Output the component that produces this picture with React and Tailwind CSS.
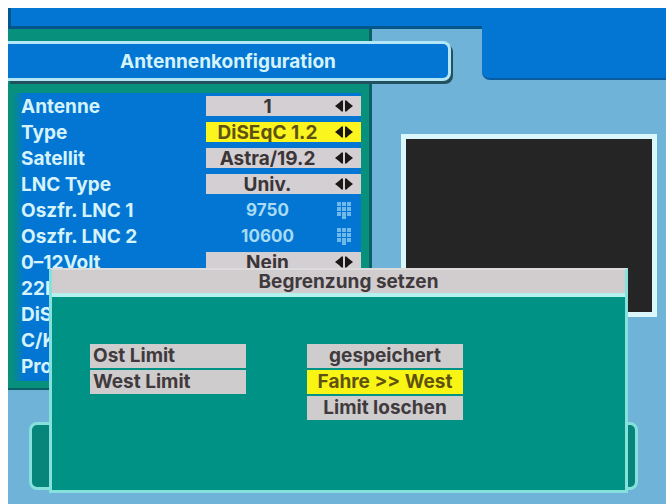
import React, { useState } from "react";

const rows = [
  { id: "antenne", label: "Antenne", type: "select", options: ["1", "2", "3", "4"] },
  { id: "type", label: "Type", type: "select", options: ["DiSEqC 1.2", "DiSEqC 1.0"], active: true },
  { id: "satellit", label: "Satellit", type: "select", options: ["Astra/19.2", "Hotbird/13.0"] },
  { id: "lnc-type", label: "LNC Type", type: "select", options: ["Univ.", "Single"] },
  { id: "lnc-1", label: "Oszfr. LNC 1", type: "number", value: "9750" },
  { id: "lnc-2", label: "Oszfr. LNC 2", type: "number", value: "10600" },
  { id: "volt", label: "0–12Volt", type: "select", options: ["Nein", "Ja"] },
  { id: "khz", label: "22k" },
  { id: "diseqc", label: "DiSEqC" },
  { id: "band", label: "C/Ku" },
  { id: "prog", label: "Prog" },
];

const ArrowsIcon = () => (
  <svg
    className="absolute right-2 top-1 pointer-events-none"
    width="18"
    height="12"
    viewBox="0 0 18 12"
    fill="#1c1717"
  >
    <path d="M4.5 2.5L6.5 0.5H8V11.5H6.5L4.5 9.5L0 6Z" />
    <path d="M13.5 2.5L11.5 0.5H10V11.5H11.5L13.5 9.5L18 6Z" />
  </svg>
);

const KeypadIcon = () => (
  <svg
    className="absolute right-2 top-[2px] pointer-events-none"
    width="16"
    height="18"
    viewBox="0 0 16 18"
    fill="#6fb9ea"
  >
    {[0, 5, 10].map((y) =>
      [0, 5, 10].map((x) => <rect key={`${x}-${y}`} x={x} y={y} width="4" height="4" />)
    )}
    <rect x="5" y="14" width="4" height="3" />
  </svg>
);

const Row = ({ row }) => {
  const [value, setValue] = useState(row.value || (row.options && row.options[0]) || "");

  if (!row.type) {
    return <div className="h-5 leading-[22px] text-[#d5f3fb]">{row.label}</div>;
  }

  return (
    <div className="flex h-5 leading-[22px]">
      <label htmlFor={row.id} className="flex-1 text-[#d5f3fb]">
        {row.label}
      </label>
      <div className="relative w-[155px]">
        {row.type === "select" ? (
          <>
            <select
              id={row.id}
              value={value}
              onChange={(e) => setValue(e.target.value)}
              className={`appearance-none block w-full h-5 pr-8 leading-[22px] text-center [text-align-last:center] outline-none ${
                row.active ? "bg-[#fbf51f] text-[#5f5210]" : "bg-[#d3cfd2] text-[#3b3538]"
              }`}
            >
              {row.options.map((option) => (
                <option key={option}>{option}</option>
              ))}
            </select>
            <ArrowsIcon />
          </>
        ) : (
          <>
            <input
              id={row.id}
              type="text"
              value={value}
              onChange={(e) => setValue(e.target.value)}
              className="block w-full h-5 pr-8 text-center text-[17px] bg-transparent text-[#a8dcf4] outline-none"
            />
            <KeypadIcon />
          </>
        )}
      </div>
    </div>
  );
};

const LimitDialog = () => {
  const [selected, setSelected] = useState("Fahre >> West");

  return (
    <div
      role="dialog"
      aria-labelledby="limit-title"
      className="absolute top-[260px] left-[41px] right-[38px] border-[3px] border-t-2 border-[#86e0db] border-t-[#dcdcdc] bg-[#009385] text-[#403a3d]"
    >
      <h2 id="limit-title" className="h-[23px] pl-5 leading-6 text-center bg-[#d1cdcf]">
        Begrenzung setzen
      </h2>
      <div className="h-1 bg-[#b5f1ee]" />
      <div className="flex items-start gap-[61px] pt-[47px] pb-[70px] pl-[38px]">
        <div className="flex flex-col gap-[2px] w-[156px] leading-6">
          <div className="h-6 pl-[3px] bg-[#cfcccd]">Ost Limit</div>
          <div className="h-6 pl-[3px] bg-[#cfcccd]">West Limit</div>
        </div>
        <div className="flex flex-col gap-[2px] w-[156px]">
          {["gespeichert", "Fahre >> West", "Limit loschen"].map((item) => (
            <button
              key={item}
              type="button"
              onClick={() => setSelected(item)}
              className={`h-6 leading-6 text-center whitespace-nowrap ${
                selected === item ? "bg-[#f8f515] text-[#5f5210]" : "bg-[#cfcccd]"
              }`}
            >
              {item}
            </button>
          ))}
        </div>
      </div>
    </div>
  );
};

const App = () => {
  return (
    <div className="min-h-screen bg-[#fefefe] pt-2 pl-2 pr-[2px] font-['Inter','Liberation_Sans',sans-serif] text-[19px] font-bold">
      <div className="relative pb-[17px] bg-[#6fb3d8]">
        {/* Top bar with the corner block */}
        <header className="relative h-[21px] bg-[#0376d3] border-b-[3px] border-l-[3px] border-[#04568a]">
          <div className="absolute top-0 right-0 w-[184px] h-[72px] rounded-bl-lg bg-[#0376d3] border-b-2 border-[#0a5c9f]" />
        </header>

        <div className="grid grid-cols-[364fr_294fr] items-start">
          {/* Settings */}
          <main className="pt-3 pb-[7px] bg-[#07907c] border-r-[3px] border-b-2 border-[#0b6068]">
            <h1 className="relative h-[40px] -mr-[82px] leading-9 text-center text-[#d5f3fb] bg-[#0376d3] border-[3px] border-l-0 border-[#b3e6f7] rounded-r-lg shadow-[2px_3px_0_#22505c]">
              Antennenkonfiguration
            </h1>
            <div className="mt-3 ml-1 mr-2">
              <div className="flex flex-col gap-[6px] pt-[3px] pb-[5px] pl-[9px] bg-[linear-gradient(to_right,#07907c,#0376d3_12px)]">
                {rows.map((row) => (
                  <Row key={row.id} row={row} />
                ))}
              </div>
            </div>
          </main>

          {/* Live picture */}
          <div className="mt-[105px] ml-[29px] mr-[9px] aspect-[256/183] bg-[#252525] border-[5px] border-[#dcf7fc]" />
        </div>

        <div className="mt-8 ml-[21px] mr-7 h-[68px] rounded-lg border-[3px] border-[#86e0db] bg-[#07857a]" />

        <LimitDialog />
      </div>
    </div>
  );
};

export default App;
